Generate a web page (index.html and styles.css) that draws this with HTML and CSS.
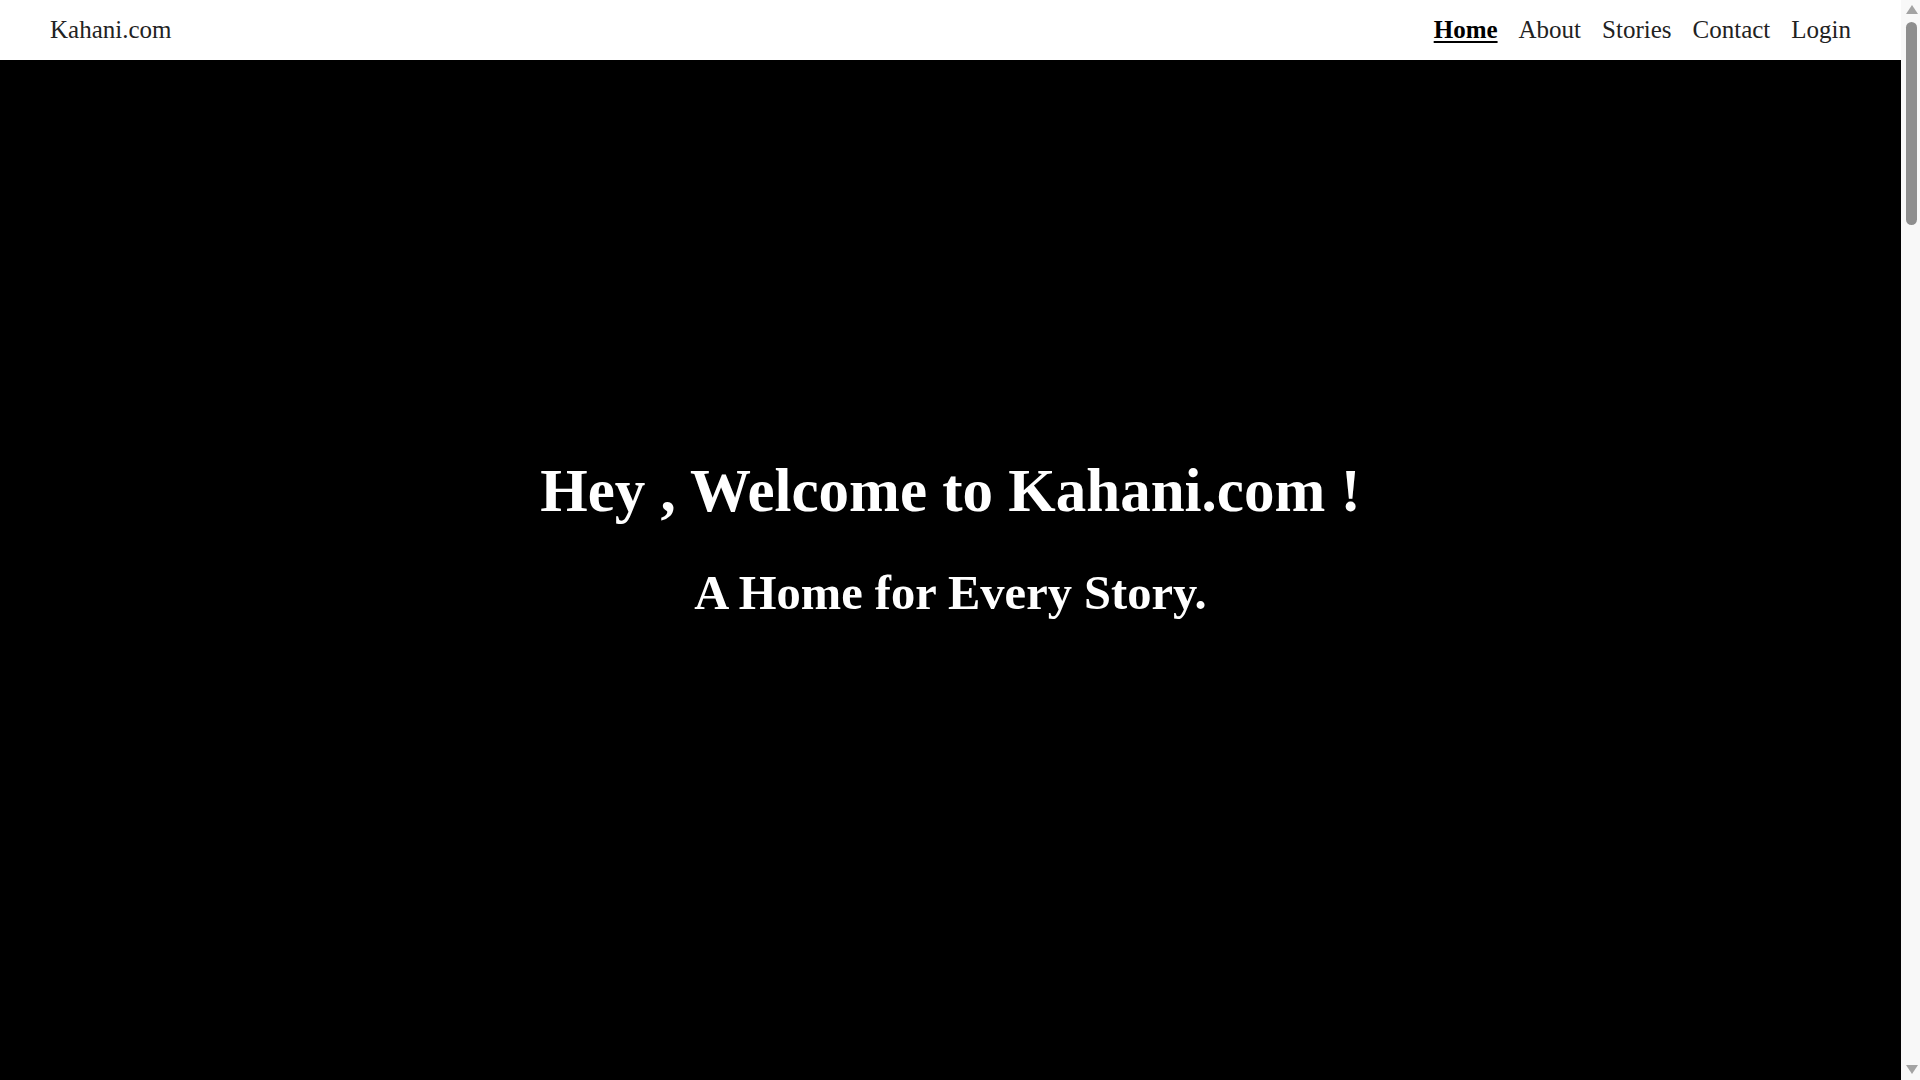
FILE: index.html
```html
<!DOCTYPE html>
<html lang="en">
<head>
<meta charset="utf-8">
<title>Kahani.com</title>
<link rel="stylesheet" href="styles.css">
</head>
<body>
<header class="navbar">
  <a class="brand" href="#">Kahani.com</a>
  <nav class="nav-links">
    <a class="nav-link active" href="#">Home</a>
    <a class="nav-link" href="#">About</a>
    <a class="nav-link" href="#">Stories</a>
    <a class="nav-link" href="#">Contact</a>
    <a class="nav-link" href="#">Login</a>
  </nav>
</header>
<main>
  <section class="hero">
    <h1 class="hero-title">Hey , Welcome to Kahani.com !</h1>
    <h2 class="hero-subtitle">A Home for Every Story.</h2>
  </section>
  <section class="more"></section>
</main>
<div class="fake-scrollbar" aria-hidden="true">
  <span class="sb-arrow sb-up"></span>
  <span class="sb-thumb"></span>
  <span class="sb-arrow sb-down"></span>
</div>
</body>
</html>
```
FILE: styles.css
```css
html, body {
  margin: 0;
  padding: 0;
}
html {
  scrollbar-width: none;
}
body {
  font-family: "Liberation Serif", "Times New Roman", serif;
  background: #000;
  color: #fff;
  padding-right: 19px;
}
.navbar {
  height: 60px;
  background: #fff;
  display: flex;
  align-items: center;
  justify-content: space-between;
  padding: 0 50px 2px;
  box-sizing: border-box;
}
.brand {
  color: #222;
  text-decoration: none;
  font-size: 25px;
  line-height: 1;
}
.nav-links {
  display: flex;
  gap: 21px;
}
.nav-link {
  color: #222;
  text-decoration: none;
  font-size: 25px;
  line-height: 1;
}
.nav-link.active {
  color: #000;
  font-weight: bold;
  text-decoration: underline;
  text-underline-offset: 3px;
}
.hero {
  height: 1020px;
  box-sizing: border-box;
  padding-bottom: 64px;
  display: flex;
  flex-direction: column;
  align-items: center;
  justify-content: center;
  gap: 37px;
  text-align: center;
}
.hero-title {
  margin: 0;
  font-size: 61px;
  line-height: 72px;
  font-weight: bold;
}
.hero-subtitle {
  margin: 0;
  font-size: 48.5px;
  line-height: 58px;
  font-weight: bold;
}
.more {
  height: 4480px;
  background: #000;
}
.fake-scrollbar {
  position: fixed;
  top: 0;
  right: 0;
  width: 19px;
  height: 100vh;
  background: #f8f8f8;
}
.sb-thumb {
  position: absolute;
  top: 22px;
  left: 5px;
  width: 11px;
  height: 203px;
  border-radius: 6px;
  background: #8e8e8e;
}
.sb-arrow {
  position: absolute;
  left: 5px;
  width: 0;
  height: 0;
  border-left: 6px solid transparent;
  border-right: 6px solid transparent;
}
.sb-up {
  top: 5px;
  border-bottom: 9px solid #a3a3a3;
}
.sb-down {
  bottom: 6px;
  border-top: 9px solid #a3a3a3;
}
```
